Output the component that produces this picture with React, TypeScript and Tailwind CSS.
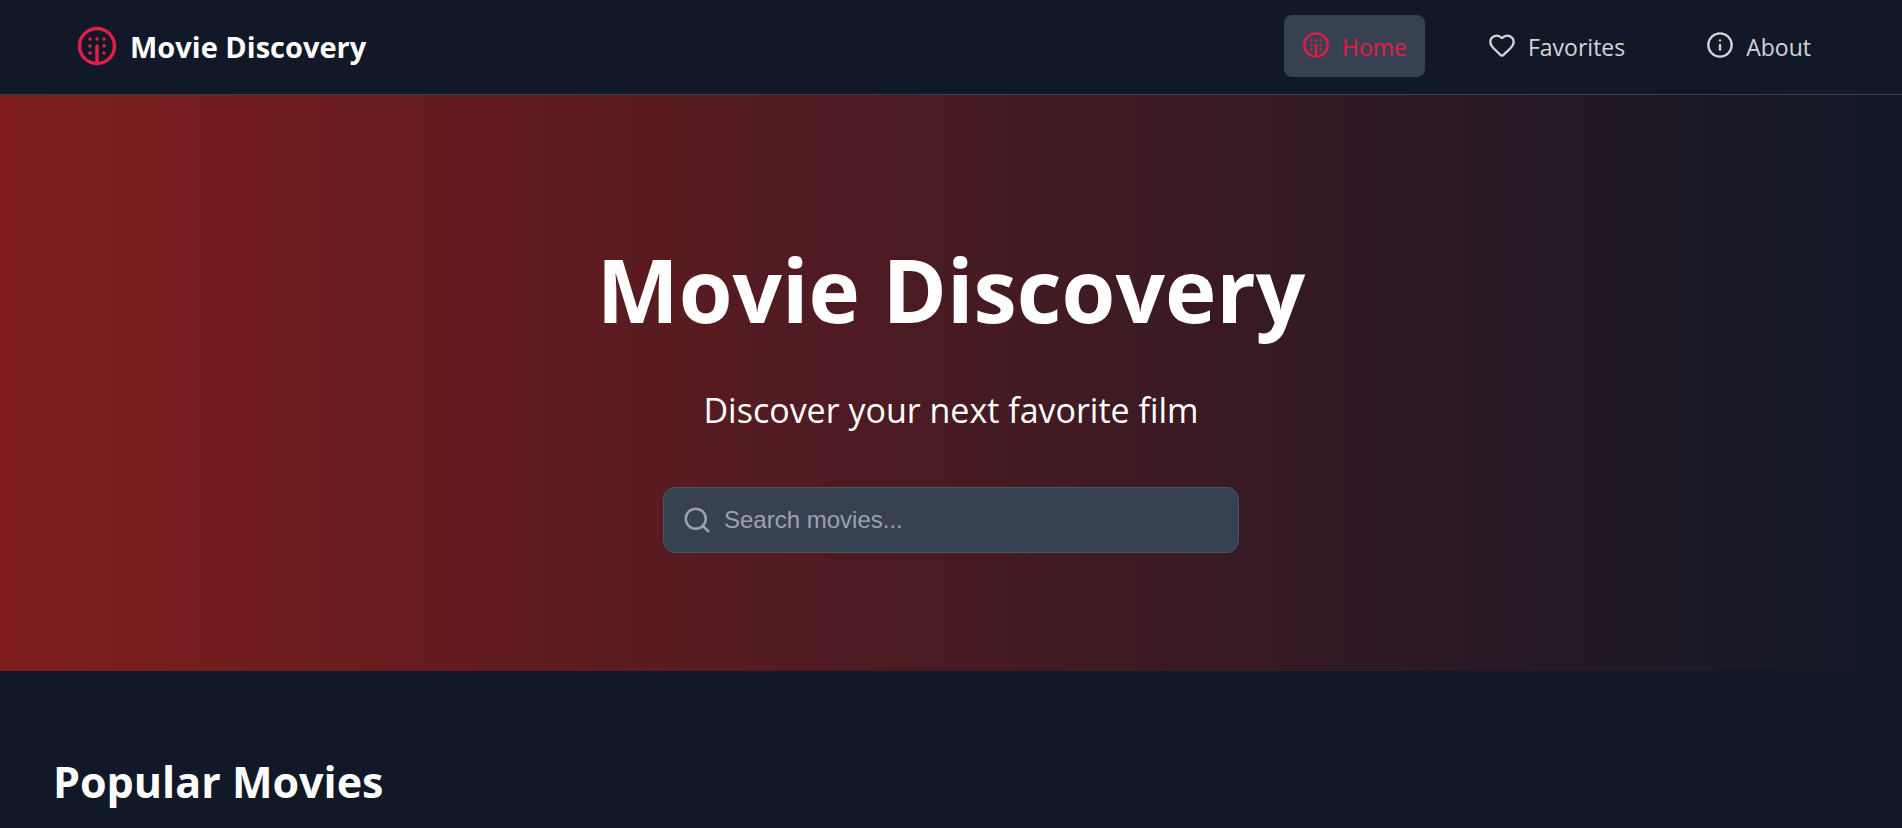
import { Heart, Info, Search } from "lucide-react";
import type { ReactNode } from "react";

function ReelIcon({ className }: { className?: string }) {
  return (
    <svg
      viewBox="0 0 24 24"
      fill="none"
      stroke="currentColor"
      strokeWidth="2"
      strokeLinecap="round"
      strokeLinejoin="round"
      aria-hidden="true"
      className={className}
    >
      <circle cx="12" cy="12" r="10" />
      <path d="M8 8h.01M12 8h.01M16 8h.01M8 12h.01M16 12h.01M8 16h.01M16 16h.01M12 12v9" />
    </svg>
  );
}

function NavLink({ href, active, icon, children }: { href: string; active?: boolean; icon: ReactNode; children: ReactNode }) {
  return (
    <a
      href={href}
      aria-current={active ? "page" : undefined}
      className={
        active
          ? "flex items-center gap-3 rounded-lg bg-[#374151] px-[18px] py-3 text-[#e11d48]"
          : "flex items-center gap-3 rounded-lg px-[18px] py-3 text-[#d1d5db]"
      }
    >
      <span className="pb-0.5">{icon}</span>
      <span className="pt-0.5">{children}</span>
    </a>
  );
}

export default function App() {
  return (
    <div className="min-h-screen bg-[#111827] font-['Open_Sans','Noto_Sans',sans-serif] text-white">
      <header className="border-b border-[#374151]">
        <div className="flex items-center justify-between pt-[15px] pr-[73px] pb-[17px] pl-[76px]">
          <a href="#home" className="flex items-center gap-3 text-[29px] leading-9 font-bold">
            <ReelIcon className="size-[42px] text-[#e11d48]" />
            <span className="pt-0.5">Movie Discovery</span>
          </a>
          <nav className="flex items-center gap-[45px] text-[23px] leading-9">
            <NavLink href="#home" active icon={<ReelIcon className="size-7" />}>
              Home
            </NavLink>
            <NavLink href="#favorites" icon={<Heart className="size-7" />}>
              Favorites
            </NavLink>
            <NavLink href="#about" icon={<Info className="size-7" />}>
              About
            </NavLink>
          </nav>
        </div>
      </header>

      <main>
        <section className="flex flex-col items-center bg-[linear-gradient(to_right,#7f1d1d,#111827)] px-12 pt-[140px] pb-[118px] text-center">
          <h1 className="text-[87px] leading-[108px] font-bold">Movie Discovery</h1>
          <p className="mt-10 text-[34px] leading-[54px]">Discover your next favorite film</p>
          <label className="mt-[50px] flex w-full max-w-[576px] items-center gap-3 rounded-xl border border-[#4b5563] bg-[#374151] px-[18px] py-[14px]">
            <Search className="size-[30px] shrink-0 text-[#9ca3af]" aria-hidden="true" />
            <input
              type="search"
              aria-label="Search movies"
              placeholder="Search movies..."
              className="min-w-0 flex-1 bg-transparent font-['Liberation_Sans',sans-serif] text-[24px] leading-9 outline-none placeholder:text-[#9ca3af]"
            />
          </label>
        </section>

        <section className="px-[53px] pt-[81px]">
          <h2 className="text-[43px] leading-[60px] font-bold">Popular Movies</h2>
        </section>
      </main>
    </div>
  );
}
